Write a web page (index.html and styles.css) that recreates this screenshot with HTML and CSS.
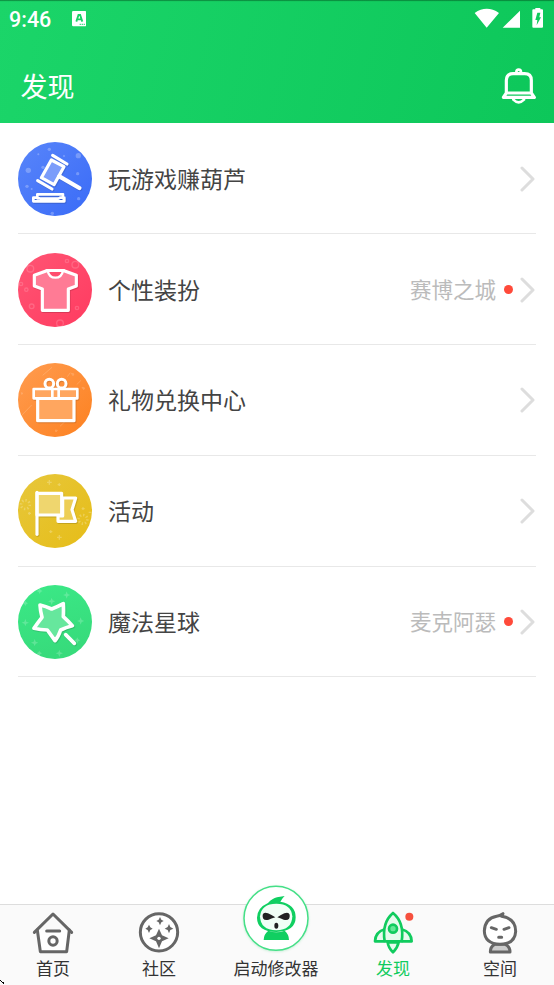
FILE: index.html
```html
<!DOCTYPE html>
<html lang="zh-CN">
<head>
<meta charset="utf-8">
<title>发现</title>
<link rel="stylesheet" href="styles.css">
</head>
<body>
<div class="screen">
  <header class="header">
    <div class="status">
      <span class="time">9:46</span>
      <svg class="status-app" viewBox="216 33 43 46"><rect x="216" y="33" width="43" height="46" rx="4" fill="#fff"/><path d="M229 65 L235.500 45 H240.500 L247 65 M232 58 H244" fill="none" stroke="#18d267" stroke-width="5.500"/><path d="M239 73h4m2 0h4m2 0h4" stroke="#18d267" stroke-width="3"/></svg>
      <svg class="status-right" viewBox="42 18 216 72"><path d="M44 39 Q80 14 117 39 L80 83Z M180 32V83H128Z" fill="#fff"/><path d="M226 28V24H241V28H246Q249 28 249 31V80Q249 83 246 83H220Q217 83 217 80V31Q217 28 220 28Z" fill="#fff"/><path d="M232 38H241L238 52H243L230 76L232 60H226Z" fill="#10cb5d"/></svg>
    </div>
    <div class="titlebar">
      <h1>发现</h1>
      <svg class="bell" viewBox="123 201 108 114" fill="none" stroke="#fff" stroke-width="9.500" stroke-linejoin="round" stroke-linecap="round"><path d="M139 277V241Q139 221 159 221H194Q214 221 214 241V277M139 279H214L223 292H130Z"/><path d="M169 217Q169 209 176 209T183 217" stroke-width="8"/><path d="M160 299Q176 315 192 299" stroke-width="8"/></svg>
    </div>
  </header>

  <main class="list">
    <div class="row">
      <svg class="icon" viewBox="24 27 222 222">
        <defs><linearGradient id="blue" x2="1" y2="1"><stop stop-color="#5885fa"/><stop offset="1" stop-color="#3a6bf7"/></linearGradient></defs>
        <circle cx="135" cy="138" r="111" fill="url(#blue)"/>
        <g fill="#fff" opacity=".25"><circle cx="118" cy="49" r="5"/><circle cx="205" cy="68" r="8"/><circle cx="85" cy="64" r="3"/><circle cx="162" cy="69" r="3"/><circle cx="55" cy="112" r="8"/><circle cx="99" cy="103" r="5"/><circle cx="203" cy="122" r="5"/><circle cx="51" cy="160" r="5"/><circle cx="65" cy="168" r="3"/><circle cx="206" cy="197" r="5"/><circle cx="127" cy="241" r="5"/></g>
        <g class="glyph"><path d="M124 81L162 101L132 155L94 134Z" fill="#7b9cfa"/><path d="M128 67L171 93M83 143L126 168"/><path d="M148 130L208 165" stroke-width="13"/><path d="M82 184H159V196M82 184V196M70 194V205H163V194H151M70 194H82L92 197H145L151 194" stroke-width="8"/></g>
      </svg>
      <span class="name">玩游戏赚葫芦</span>
      <svg class="arrow" viewBox="0 0 16 28"><path d="M2 3L13 14L2 25"/></svg>
    </div>
    <div class="row">
      <svg class="icon" viewBox="24 27 222 222">
        <defs><linearGradient id="red" x2="1" y2="1"><stop stop-color="#ff5574"/><stop offset="1" stop-color="#ff3b60"/></linearGradient></defs>
        <circle cx="135" cy="138" r="111" fill="url(#red)"/>
        <g fill="none" stroke="#fff" stroke-width="4" opacity=".16"><circle cx="196" cy="62" r="10"/><circle cx="171" cy="51" r="5"/><circle cx="61" cy="74" r="10"/><circle cx="33" cy="120" r="5"/><circle cx="49" cy="137" r="5"/><circle cx="65" cy="187" r="7"/><circle cx="201" cy="192" r="5"/><circle cx="150" cy="238" r="10"/></g>
        <g class="glyph"><path d="M110 80L73 94V126L97 135V199H175V135L199 126V94L162 80Z" fill="#ff7b95"/><path d="M113 80Q117 101 136 101T159 80" fill="#ff4d6d" stroke-width="7"/><path d="M110 80H162" stroke-width="8"/></g>
      </svg>
      <span class="name">个性装扮</span>
      <span class="note">赛博之城</span><i class="dot"></i>
      <svg class="arrow" viewBox="0 0 16 28"><path d="M2 3L13 14L2 25"/></svg>
    </div>
    <div class="row">
      <svg class="icon" viewBox="24 27 222 222">
        <defs><linearGradient id="orange" x2="1" y2="1"><stop stop-color="#ff9c50"/><stop offset="1" stop-color="#fd8120"/></linearGradient></defs>
        <circle cx="135" cy="138" r="111" fill="url(#orange)"/>
        <g stroke="#fff" stroke-width="3" opacity=".17"><path d="M98 64L126 40M35 184L65 153M150 217L177 191M172 68L181 56M200 92L213 79"/><path d="M184 58l8 2-3 5zM216 100l8 2-3 5zM34 116l5 2-4 3zM136 228l6 1-4 5z" fill="#fff"/></g>
        <g class="glyph"><path d="M83 133H192V200H83Z" fill="#ffa65f"/><path d="M71 105H202V133H71Z" fill="#ffa65f" stroke-width="8"/><path d="M127 105V132M146 105V132" stroke-width="8"/><circle cx="118" cy="89" r="13" stroke-width="9"/><circle cx="155" cy="89" r="13" stroke-width="9"/></g>
      </svg>
      <span class="name">礼物兑换中心</span>
      <svg class="arrow" viewBox="0 0 16 28"><path d="M2 3L13 14L2 25"/></svg>
    </div>
    <div class="row">
      <svg class="icon" viewBox="24 27 222 222">
        <defs><linearGradient id="gold" x2="1" y2="1"><stop stop-color="#e7c73b"/><stop offset="1" stop-color="#e6bd18"/></linearGradient></defs>
        <circle cx="135" cy="138" r="111" fill="url(#gold)"/>
        <g stroke="#fff" fill="none" stroke-width="4" opacity=".24"><circle cx="46" cy="119" r="13" stroke-dasharray="4 6" stroke-width="8"/><circle cx="219" cy="163" r="13" stroke-dasharray="4 6" stroke-width="8"/><path d="M111 52h14m-7-7v14M141 217h14m-7-7v14M143 59h9M118 200h9M54 145h9M215 131h9M148 55v8M122 196v8M58 141v8M219 127v8M236 142h8"/></g>
        <g class="glyph"><path d="M158 99H197L186 134L197 169H144V153H158Z" fill="#edce56"/><path d="M81 85H155V150H81Z" fill="#efd66e"/><path d="M81 82V208"/></g>
      </svg>
      <span class="name">活动</span>
      <svg class="arrow" viewBox="0 0 16 28"><path d="M2 3L13 14L2 25"/></svg>
    </div>
    <div class="row">
      <svg class="icon" viewBox="24 27 222 222">
        <defs><linearGradient id="green" x2=".3" y2="1"><stop stop-color="#3be987"/><stop offset="1" stop-color="#37db7b"/></linearGradient></defs>
        <circle cx="135" cy="138" r="111" fill="url(#green)"/>
        <path d="M170 46l3 8 8 3-8 3-3 8-3-8-8-3 8-3zM125 65l3 8 8 3-8 3-3 8-3-8-8-3 8-3zM46 129l3 8 8 3-8 3-3 8-3-8-8-3 8-3zM212 124l3 8 8 3-8 3-3 8-3-8-8-3 8-3zM74 189l3 8 8 3-8 3-3 8-3-8-8-3 8-3zM148 221l3 8 8 3-8 3-3 8-3-8-8-3 8-3zM89 36l3 6 6 3-6 3-3 6-3-6-6-3 6-3zM202 184l3 6 6 3-6 3-3 6-3-6-6-3 6-3zM46 74l3 5 5 3-5 3-3 5-3-5-5-3 5-3zM88 224l3 5 5 3-5 3-3 5-3-5-5-3 5-3z" fill="#fff" opacity=".2"/>
        <g class="glyph"><path d="M90 87Q107 91 125 99Q143 92 160 83Q161 103 160 122Q175 136 187 149Q168 154 152 162Q145 183 135 194Q122 176 112 162Q91 162 72 157Q84 139 96 124Q91 106 90 87Z" fill="#66e79d" stroke-width="11"/><path d="M167 176L193 202" stroke-width="11"/></g>
      </svg>
      <span class="name">魔法星球</span>
      <span class="note">麦克阿瑟</span><i class="dot"></i>
      <svg class="arrow" viewBox="0 0 16 28"><path d="M2 3L13 14L2 25"/></svg>
    </div>
  </main>

  <nav class="tabs">
    <div class="tab">
      <svg class="tab-icon line" viewBox="93 45 132 132"><path d="M112 105L121 170H200L208 105" fill="#fff"/><path d="M103 112L159 57L215 112M140 108H179"/><circle cx="159" cy="138" r="12.500"/></svg>
      <span>首页</span>
    </div>
    <div class="tab">
      <svg class="tab-icon line" viewBox="412 45 132 132"><circle cx="478" cy="112" r="56" fill="#fff"/><path d="M478 101L487 121L507 130L487 139L478 160L469 139L449 130L469 121Z" fill="#666" stroke="none"/><circle cx="478" cy="130" r="5" fill="#fff" stroke="none"/><path d="M481 66l4 8 7 4-7 4-4 9-4-9-7-4 7-4zM448 89l4 8 7 4-7 4-4 9-4-9-7-4 7-4zM508 87l4 9 9 5-9 4-4 10-4-10-9-4 9-5z" fill="#666" stroke="none"/></svg>
      <span>社区</span>
    </div>
    <div class="tab launch">
      <svg class="launch-icon" viewBox="60 21 216 216">
        <circle class="launch-ring" cx="168" cy="130" r="96"/>
        <path d="M144 84Q157 70 171 67L194 63Q187 69 181 80Q227 88 227 127Q227 169 169 171Q111 169 111 128Q112 98 144 84Z" fill="#10cf61"/>
        <path d="M169 86Q214 86 217 124Q216 165 169 166Q121 165 120 124Q124 86 169 86Z" fill="#f1fff6"/>
        <path d="M131 195Q131 178 145 167Q169 177 194 167Q207 178 207 195Z" fill="#10cf61"/>
        <path d="M128 119Q131 110 144 115Q157 121 166 127Q153 131 146 134Q126 139 128 119ZM209 119Q206 110 193 115Q180 121 172 127Q184 131 191 134Q211 139 209 119Z" fill="#222"/>
        <ellipse cx="169" cy="152" rx="6" ry="9" fill="#222"/>
      </svg>
      <span>启动修改器</span>
    </div>
    <div class="tab active">
      <svg class="tab-icon rocket" viewBox="63 45 132 132"><path d="M113 142Q115 158 129 172Q143 158 146 142Z"/><path d="M104 103Q76 111 75 139H104M155 103Q184 111 185 139H155"/><path d="M104 139Q95 83 129 54Q164 83 155 139Z"/><circle cx="129" cy="101" r="12" fill="#65e798"/><circle cx="178" cy="65" r="12" fill="#f6503e" stroke="none"/></svg>
      <span>发现</span>
    </div>
    <div class="tab">
      <svg class="tab-icon line" viewBox="384 45 132 132"><path d="M421 171Q421 155 434 148H466Q480 155 480 171Z" fill="#ccc"/><path d="M440 64Q450 63 459 56L455 64Q497 71 497 109Q495 147 450 148Q404 146 403 108Q405 70 440 64Z" fill="#fff"/><path d="M424 98L439 103M477 98L462 103M446 127H455"/></svg>
      <span>空间</span>
    </div>
    <svg class="corner" viewBox="0 0 4 5"><path d="M0 0h1v1H0zM1 1h1v1H1zM2 3h1v-1H2zM3 2h1v2H3z"/></svg>
  </nav>
</div>
</body>
</html>
```
FILE: styles.css
```css
* { box-sizing: border-box; }
body { margin: 0; background: #fff; font-family: "Noto Sans CJK SC", sans-serif; }
svg { display: block; flex: none; }
.screen { height: 985px; display: flex; flex-direction: column; overflow: hidden; }

.header { height: 123px; flex: none; background: linear-gradient(105deg, #1bd569, #0dc75a); color: #fff; box-shadow: inset 0 2px 1px -1px rgba(0, 60, 20, .45); }
.status { height: 38px; display: flex; align-items: center; padding: 0 12px 0 9px; }
.time { font: 500 21.5px/38px Roboto, sans-serif; width: 63px; padding-top: 2px; }
.status-app { width: 14.3px; height: 15.3px; }
.status-right { width: 72px; height: 24px; margin-left: auto; margin-right: -4px; margin-top: -2px; }
.titlebar { height: 85px; display: flex; align-items: center; justify-content: space-between; padding: 0 17px 0 20.5px; }
h1 { margin: 0; padding-top: 10px; font-size: 27px; line-height: 40px; font-weight: 400; }
.bell { width: 36px; height: 38px; margin-top: 11px; }

.list { flex: 1; padding: .4px 18px 0; }
.row { height: 110.8px; display: flex; align-items: center; border-bottom: 1px solid #e8e8e8; }
.icon { width: 74px; height: 74px; margin: 1px 0 0 .3px; }
.glyph { fill: none; stroke: #fff; stroke-width: 9.5; stroke-linejoin: round; stroke-linecap: round; filter: drop-shadow(2px 3px 1px rgba(0, 0, 0, .15)); }
.name { margin: -1px 0 0 15.7px; font-size: 23px; line-height: 34px; color: #444; flex: 1; }
.note { font-size: 21.5px; line-height: 32px; color: #bbb; }
.dot { width: 9px; height: 9px; border-radius: 50%; background: #ff4a3a; margin: 1px 7px 0 8px; }
.arrow { width: 16px; height: 28px; margin-top: 1px; fill: none; stroke: #ddd; stroke-width: 3; stroke-linecap: round; stroke-linejoin: round; }

.tabs { position: relative; height: 81px; flex: none; display: grid; grid-template-columns: 106px 106px 128px 106px 108px; background: #fafafa; border-top: 1px solid #ddd; }
.tab { display: flex; flex-direction: column; align-items: center; font-size: 17px; line-height: 24px; color: #333; }
.tab span { margin-top: 2px; }
.tab-icon { width: 44px; height: 44px; margin-top: 5px; }
.line { fill: none; stroke: #666; stroke-width: 9; stroke-linecap: round; stroke-linejoin: round; }
.rocket { fill: #e6fbee; stroke: #10cb5e; stroke-width: 8; stroke-linejoin: round; }
.active { color: #10cb5e; }
.launch-icon { width: 72px; height: 72px; margin-top: -23px; }
.launch-ring { fill: #fff; stroke: #45df87; stroke-width: 4.5; filter: drop-shadow(0 2px 3px rgba(30, 200, 100, .25)); }
.corner { position: absolute; left: 0; bottom: 0; width: 4px; height: 5px; }
```
